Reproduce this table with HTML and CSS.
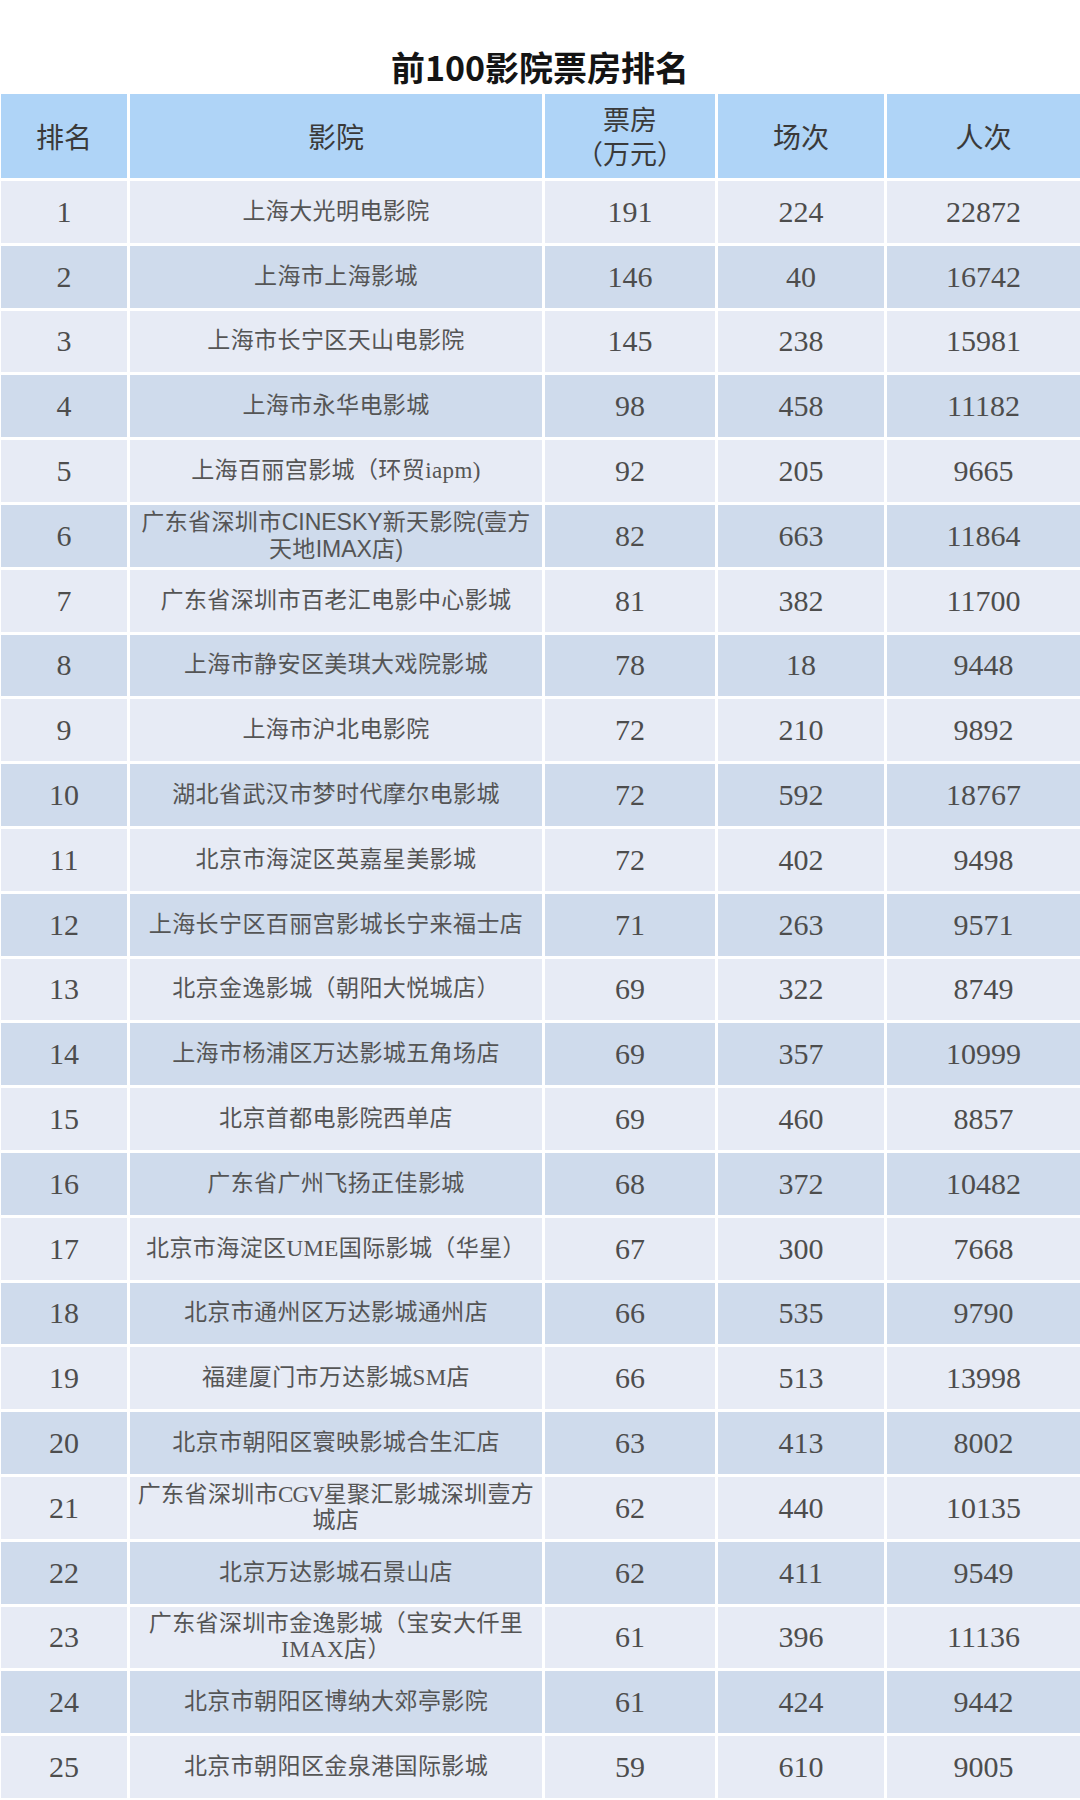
FILE: index.html
```html
<!DOCTYPE html>
<html lang="zh-CN">
<head>
<meta charset="utf-8">
<title>前100影院票房排名</title>
<link rel="stylesheet" href="styles.css">
</head>
<body>
<div class="page">
  <h1 class="title">前100影院票房排名</h1>
  <div class="grid">
    <div class="cell head">排名</div>
    <div class="cell head">影院</div>
    <div class="cell head two"><span>票房<br>（万元）</span></div>
    <div class="cell head">场次</div>
    <div class="cell head">人次</div>

    <div class="cell num r1">1</div><div class="cell name r1">上海大光明电影院</div><div class="cell num r1">191</div><div class="cell num r1">224</div><div class="cell num r1">22872</div>
    <div class="cell num r2">2</div><div class="cell name r2">上海市上海影城</div><div class="cell num r2">146</div><div class="cell num r2">40</div><div class="cell num r2">16742</div>
    <div class="cell num r1">3</div><div class="cell name r1">上海市长宁区天山电影院</div><div class="cell num r1">145</div><div class="cell num r1">238</div><div class="cell num r1">15981</div>
    <div class="cell num r2">4</div><div class="cell name r2">上海市永华电影城</div><div class="cell num r2">98</div><div class="cell num r2">458</div><div class="cell num r2">11182</div>
    <div class="cell num r1">5</div><div class="cell name r1">上海百丽宫影城（环贸iapm)</div><div class="cell num r1">92</div><div class="cell num r1">205</div><div class="cell num r1">9665</div>
    <div class="cell num r2">6</div><div class="cell name wrap r2"><span class="txt">广东省深圳市<span class="sans">CINESKY</span>新天影院<span class="sans">(</span>壹方<br>天地<span class="sans">IMAX</span>店<span class="sans">)</span></span></div><div class="cell num r2">82</div><div class="cell num r2">663</div><div class="cell num r2">11864</div>
    <div class="cell num r1">7</div><div class="cell name r1">广东省深圳市百老汇电影中心影城</div><div class="cell num r1">81</div><div class="cell num r1">382</div><div class="cell num r1">11700</div>
    <div class="cell num r2">8</div><div class="cell name r2">上海市静安区美琪大戏院影城</div><div class="cell num r2">78</div><div class="cell num r2">18</div><div class="cell num r2">9448</div>
    <div class="cell num r1">9</div><div class="cell name r1">上海市沪北电影院</div><div class="cell num r1">72</div><div class="cell num r1">210</div><div class="cell num r1">9892</div>
    <div class="cell num r2">10</div><div class="cell name r2">湖北省武汉市梦时代摩尔电影城</div><div class="cell num r2">72</div><div class="cell num r2">592</div><div class="cell num r2">18767</div>
    <div class="cell num r1">11</div><div class="cell name r1">北京市海淀区英嘉星美影城</div><div class="cell num r1">72</div><div class="cell num r1">402</div><div class="cell num r1">9498</div>
    <div class="cell num r2">12</div><div class="cell name r2">上海长宁区百丽宫影城长宁来福士店</div><div class="cell num r2">71</div><div class="cell num r2">263</div><div class="cell num r2">9571</div>
    <div class="cell num r1">13</div><div class="cell name r1">北京金逸影城（朝阳大悦城店）</div><div class="cell num r1">69</div><div class="cell num r1">322</div><div class="cell num r1">8749</div>
    <div class="cell num r2">14</div><div class="cell name r2">上海市杨浦区万达影城五角场店</div><div class="cell num r2">69</div><div class="cell num r2">357</div><div class="cell num r2">10999</div>
    <div class="cell num r1">15</div><div class="cell name r1">北京首都电影院西单店</div><div class="cell num r1">69</div><div class="cell num r1">460</div><div class="cell num r1">8857</div>
    <div class="cell num r2">16</div><div class="cell name r2">广东省广州飞扬正佳影城</div><div class="cell num r2">68</div><div class="cell num r2">372</div><div class="cell num r2">10482</div>
    <div class="cell num r1">17</div><div class="cell name r1">北京市海淀区UME国际影城（华星）</div><div class="cell num r1">67</div><div class="cell num r1">300</div><div class="cell num r1">7668</div>
    <div class="cell num r2">18</div><div class="cell name r2">北京市通州区万达影城通州店</div><div class="cell num r2">66</div><div class="cell num r2">535</div><div class="cell num r2">9790</div>
    <div class="cell num r1">19</div><div class="cell name r1">福建厦门市万达影城SM店</div><div class="cell num r1">66</div><div class="cell num r1">513</div><div class="cell num r1">13998</div>
    <div class="cell num r2">20</div><div class="cell name r2">北京市朝阳区寰映影城合生汇店</div><div class="cell num r2">63</div><div class="cell num r2">413</div><div class="cell num r2">8002</div>
    <div class="cell num r1">21</div><div class="cell name wrap r1"><span class="txt">广东省深圳市<span class="narrow">CGV</span>星聚汇影城深圳壹方<br>城店</span></div><div class="cell num r1">62</div><div class="cell num r1">440</div><div class="cell num r1">10135</div>
    <div class="cell num r2">22</div><div class="cell name r2">北京万达影城石景山店</div><div class="cell num r2">62</div><div class="cell num r2">411</div><div class="cell num r2">9549</div>
    <div class="cell num r1">23</div><div class="cell name wrap r1"><span class="txt">广东省深圳市金逸影城（宝安大仟里<br>IMAX店）</span></div><div class="cell num r1">61</div><div class="cell num r1">396</div><div class="cell num r1">11136</div>
    <div class="cell num r2">24</div><div class="cell name r2">北京市朝阳区博纳大郊亭影院</div><div class="cell num r2">61</div><div class="cell num r2">424</div><div class="cell num r2">9442</div>
    <div class="cell num r1">25</div><div class="cell name r1">北京市朝阳区金泉港国际影城</div><div class="cell num r1">59</div><div class="cell num r1">610</div><div class="cell num r1">9005</div>
  </div>
</div>
</body>
</html>
```
FILE: styles.css
```css
html, body {
  margin: 0;
  padding: 0;
  background: #ffffff;
}

.page {
  width: 1080px;
  height: 1800px;
  overflow: hidden;
}

.title {
  margin: 0;
  padding: 47px 0 7px;
  height: 40px;
  line-height: 40px;
  text-align: center;
  font-family: "Noto Sans CJK SC", sans-serif;
  font-weight: 700;
  font-size: 34px;
  color: #141414;
}

.grid {
  display: grid;
  grid-template-columns: 126px 412px 170px 166px 193px;
  grid-template-rows: 84px repeat(25, 61.8px);
  column-gap: 3px;
  row-gap: 3px;
  padding-left: 1px;
}

.cell {
  display: flex;
  align-items: center;
  justify-content: center;
  text-align: center;
}

.head {
  background: #afd4f7;
  font-family: "Noto Sans CJK SC", sans-serif;
  font-size: 28px;
  line-height: 34px;
  color: #3a3a3a;
}

.two {
  font-size: 27px;
}

.r1 {
  background: #e7ebf5;
}

.r2 {
  background: #cfdbec;
}

.num {
  font-family: "Liberation Serif", serif;
  font-size: 30px;
  color: #4d4d4d;
}

.name {
  font-family: "Liberation Serif", "Noto Sans CJK SC", serif;
  font-size: 23px;
  letter-spacing: 0.4px;
  color: #555555;
  line-height: 26px;
  white-space: nowrap;
}

.txt {
  display: block;
}

.sans {
  font-family: "Liberation Sans", sans-serif;
  letter-spacing: 0;
}

.narrow {
  letter-spacing: -1px;
}
```
